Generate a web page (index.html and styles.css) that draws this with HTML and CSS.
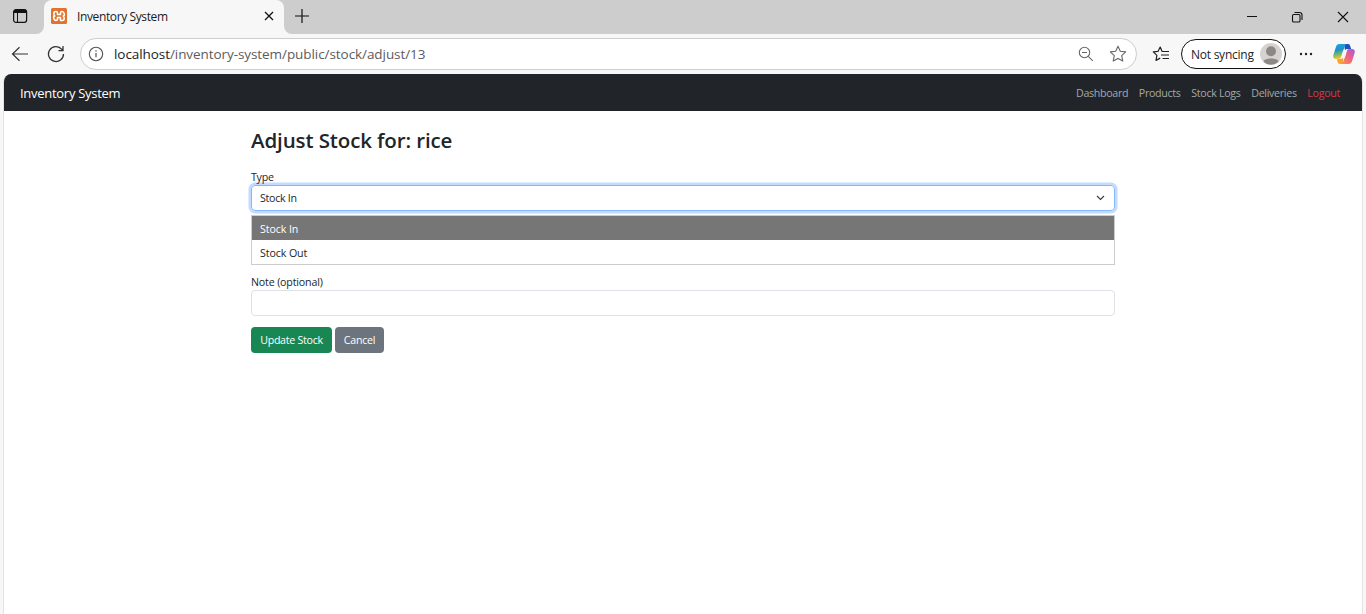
FILE: index.html
```html
<!DOCTYPE html>
<html lang="en">
<head>
<meta charset="utf-8">
<title>Inventory System</title>
<link rel="stylesheet" href="styles.css">
</head>
<body>
<header class="tabstrip">
  <div class="workspace">
    <svg width="16" height="16" viewBox="0 0 16 16"><rect x="1.600" y="1.600" width="13" height="12.800" rx="2.400" fill="none" stroke="#111" stroke-width="1.200"/><path d="M1.500 5V4a2.500 2.500 0 0 1 2.500-2.500h8A2.500 2.500 0 0 1 14.600 4v1z" fill="#111"/><path d="M5.500 5v9" stroke="#111"/></svg>
  </div>
  <div class="tab">
    <svg class="favicon" width="16" height="16" viewBox="0 0 16 16"><rect width="16" height="16" rx="1.500" fill="#e0742f"/><path d="M5 3.500Q6.500 3.500 6.500 5V6.500H9.500V5Q9.500 3.500 11 3.500T13.200 5.500 12.200 8Q13.200 8.500 13.200 10.500T11 12.500 9.500 11V9.500H6.500V11Q6.500 12.500 5 12.500T2.800 10.500 3.800 8Q2.800 7.500 2.800 5.500T5 3.500z" fill="none" stroke="#fff" stroke-width="1.600" stroke-linejoin="round"/></svg>
    <span class="tab-title">Inventory System</span>
    <svg class="tab-close" width="10" height="10" viewBox="0 0 10 10"><path d="M1 1l8 8M9 1L1 9" stroke="#111" stroke-width="1.300"/></svg>
  </div>
  <svg class="new-tab" width="14" height="14" viewBox="0 0 14 14"><path d="M7 0v14M0 7h14" stroke="#111" stroke-width="1.200"/></svg>
  <div class="window-controls">
    <svg width="10" height="12" viewBox="0 0 10 12"><path d="M0 5.500h10" stroke="#111"/></svg>
    <svg width="12" height="12" viewBox="0 0 12 12" fill="none" stroke="#111" stroke-width="1.100"><rect x="1.500" y="3.500" width="7.500" height="7.500" rx="1.300"/><path d="M3.500 1.500H8.500A2.500 2.500 0 0 1 11 4V9"/></svg>
    <svg width="12" height="12" viewBox="0 0 12 12"><path d="M1 1l10 10M11 1L1 11" stroke="#111" stroke-width="1.100"/></svg>
  </div>
</header>
<div class="toolbar">
  <svg class="back" width="18" height="16" viewBox="0 0 18 16" fill="none" stroke="#333" stroke-width="1.200"><path d="M17 8H1.500M8.500 1.200L1.500 8l7 6.800"/></svg>
  <svg class="reload" width="18" height="18" viewBox="0 0 18 18" fill="none" stroke="#333" stroke-width="1.300"><path d="M16.500 9A7.500 7.500 0 1 1 14.800 4.300L16 5.600M16 1v4.600H11.500"/></svg>
  <div class="address">
    <svg width="16" height="16" viewBox="0 0 16 16"><circle cx="8" cy="8" r="6.700" fill="none" stroke="#555" stroke-width="1.100"/><path d="M8 7v4.300" stroke="#555" stroke-width="1.200"/><circle cx="8" cy="5" r=".8" fill="#555"/></svg>
    <span class="url"><span class="host">localhost</span>/inventory-system/public/stock/adjust/13</span>
    <svg class="zoom" width="16" height="16" viewBox="0 0 16 16" fill="none" stroke="#666" stroke-width="1.100"><circle cx="6.500" cy="6.500" r="5.200"/><path d="M4 6.500h5M10.300 10.300l4.500 4.500"/></svg>
    <svg class="star" width="18" height="18" viewBox="0 0 18 18" fill="none" stroke="#666" stroke-width="1.100" stroke-linejoin="round"><path d="M9 1.300l2.300 5 5.400.6-4 3.700 1.100 5.500L9 13.400l-4.800 2.700 1.100-5.500-4-3.700 5.400-.6z"/></svg>
  </div>
  <svg class="favorites" width="18" height="18" viewBox="0 0 18 18" fill="none" stroke="#222" stroke-width="1.200" stroke-linejoin="round"><path d="M10.500 6.300H10L8.200 2 6.100 6.300l-4.800.6 3.600 3.500-.9 5 4.200-2.300M10 6.500h7M9 10h8M10.500 13.500H17"/></svg>
  <div class="profile"><span>Not syncing</span>
    <svg width="22" height="22" viewBox="0 0 22 22"><circle cx="11" cy="11" r="11" fill="#d5d2d0"/><circle cx="11" cy="8.300" r="5" fill="#8c8885"/><path d="M3.500 18.800C4 14.500 18 14.500 18.500 18.800A11 11 0 0 1 3.500 18.800z" fill="#8c8885"/></svg>
  </div>
  <svg class="more" width="14" height="4" viewBox="0 0 14 4" fill="#222"><circle cx="2" cy="2" r="1.200"/><circle cx="7" cy="2" r="1.200"/><circle cx="12" cy="2" r="1.200"/></svg>
  <svg class="copilot" width="22" height="22" viewBox="0 0 22 22">
    <defs>
      <linearGradient id="cool" x1="0" y1="0" x2=".2" y2="1"><stop offset="0" stop-color="#16a6e5"/><stop offset=".45" stop-color="#2291c8"/><stop offset=".75" stop-color="#7cbb63"/><stop offset="1" stop-color="#f2ca25"/></linearGradient>
      <linearGradient id="warm" x1="1" y1="0" x2=".1" y2="1"><stop offset="0" stop-color="#a855e8"/><stop offset=".5" stop-color="#ec6187"/><stop offset="1" stop-color="#fb9245"/></linearGradient>
    </defs>
    <path d="M11 1h4c1.600 0 2 1.200 2.500 3l.6 2h-3.700c-1.500 0-2 .5-2.400 1.500z" fill="#204fc0"/>
    <path d="M6.500 1H14c-1.400 0-2 1.200-2.500 2.800L8.700 13c-.6 2-1.600 3-3.500 3H3C.5 16-.2 14 .4 11.900L2.900 4C3.500 2 4.500 1 6.500 1z" fill="url(#cool)"/>
    <path d="M10.500 21H7c-1.600 0-2.200-1.200-2.600-3L4 16h3c1.600 0 2.500-.8 3-2z" fill="#f9a03c"/>
    <path d="M15.500 21H8c1.400 0 2-1.200 2.500-2.800L13.200 9c.6-2 1.600-3 3.500-3H19c2.500 0 3.200 2 2.600 4.100L19.100 18c-.6 2-1.600 3-3.600 3z" fill="url(#warm)"/>
    <path d="M11.200 7h2.100c.6 0 .8.400.6 1L12 14.200c-.2.600-.6 1-1.200 1H8.700c-.6 0-.8-.4-.6-1L10 8c.2-.6.600-1 1.200-1z" fill="#f7f7f7"/>
  </svg>
</div>
<div class="viewport">
  <nav class="navbar">
    <span class="brand">Inventory System</span>
    <div class="links"><a>Dashboard</a><a>Products</a><a>Stock Logs</a><a>Deliveries</a><a class="logout">Logout</a></div>
  </nav>
  <main class="container">
    <h2>Adjust Stock for: rice</h2>
    <label>Type</label>
    <div class="control select"><span>Stock In</span>
      <svg width="9" height="6" viewBox="0 0 9 6" fill="none" stroke="#343a40" stroke-width="1.100"><path d="M1 1l3.500 3.500L8 1"/></svg>
    </div>
    <div class="options"><div class="option active">Stock In</div><div class="option">Stock Out</div></div>
    <label class="note">Note (optional)</label>
    <div class="control"></div>
    <div class="actions"><button class="btn update">Update Stock</button><button class="btn cancel">Cancel</button></div>
  </main>
</div>
</body>
</html>
```
FILE: styles.css
```css
* { box-sizing: border-box; }
body { margin: 0; height: 614px; overflow: hidden; display: flex; flex-direction: column; background: #f7f7f7; color: #212529; font-family: "Open Sans", "Noto Sans", sans-serif; }
svg { flex: none; display: block; }
span, a, label, h2, button { white-space: nowrap; }

.tabstrip { display: flex; height: 34px; flex: none; background: linear-gradient(#cdcdcd 0 17px, #f7f7f7 17px 34px); }
.workspace { width: 44px; flex: none; padding: 8px 0 0 12px; background: #cdcdcd; border-bottom-right-radius: 8px; }
.tab { width: 240px; flex: none; display: flex; align-items: center; padding: 0 10.500px 2px 7px; background: #f7f7f7; border-radius: 8px 8px 0 0; }
.tab-title { margin-left: 10px; color: #1b1b1b; font-size: 12px; letter-spacing: -.38px; }
.tab-close { margin-left: auto; }
.new-tab { box-sizing: content-box; padding: 9px 0 11px 11px; background: #cdcdcd; border-bottom-left-radius: 8px; }
.window-controls { flex: 1; display: flex; justify-content: flex-end; gap: 34px; padding: 11px 17px 0 0; background: #cdcdcd; }

.toolbar { display: flex; align-items: center; height: 40px; flex: none; padding: 0 11px; }
.reload { margin-left: 18px; }
.address { width: 1057px; height: 32px; flex: none; display: flex; align-items: center; margin-left: 15px; padding: 0 9px 0 7px; border: 1px solid #cdcdcd; border-radius: 16px; background: #fff; }
.url { margin-left: 10px; color: #5c5c5c; font-size: 13.500px; letter-spacing: -.07px; }
.host { color: #222; }
.zoom { margin-left: auto; }
.star { margin-left: 15px; }
.favorites { margin-left: 15px; }
.profile { width: 105px; height: 30px; flex: none; display: flex; align-items: center; justify-content: space-between; margin-left: 11px; padding: 0 3px 0 9px; border: 1px solid #111; border-radius: 15px; background: #fff; font-size: 12px; letter-spacing: -.25px; }
.more { margin-left: 13px; }
.copilot { margin-left: 20px; }

.viewport { flex: 1; margin: 0 3px; background: #fff; border: solid #e3e3e3; border-width: 0 1px; border-radius: 8px 8px 0 0; overflow: hidden; }
.navbar { height: 37px; display: flex; align-items: center; justify-content: space-between; padding: 0 22px 0 16px; background: #212529; }
.brand { color: #fff; font-size: 13px; letter-spacing: -.28px; }
.links { display: flex; gap: 10.700px; color: #a6a8a9; font-size: 10.670px; letter-spacing: -.31px; }
.logout { color: #dc3545; }

.container { width: 864px; margin: 0 auto 0 247px; padding-top: 15px; font-size: 10.670px; letter-spacing: -.28px; }
h2 { margin: 0 0 14px; font-size: 20.500px; line-height: 28px; font-weight: 600; letter-spacing: -.12px; }
label { display: block; height: 17px; line-height: 18px; }
.control { height: 26px; border: 1px solid #dee2e6; border-radius: 4px; }
.select { display: flex; align-items: center; justify-content: space-between; padding: 0 9px 0 8px; border-color: #86b7fe; box-shadow: 0 0 0 2.500px #c2dbfe; }
.options { height: 50px; margin-top: 4px; border: 1px solid #ccc; letter-spacing: -.1px; }
.option { height: 24px; line-height: 26px; padding-left: 8px; }
.option.active { background: #767676; color: #fff; }
.note { margin-top: 8px; letter-spacing: -.17px; }
.actions { display: flex; gap: 3px; margin-top: 11px; }
.btn { height: 26px; padding: 0; border: 0; border-radius: 4px; color: #fff; font: inherit; letter-spacing: inherit; }
.update { width: 81px; background: #198754; }
.cancel { width: 49px; background: #6c757d; }
```
